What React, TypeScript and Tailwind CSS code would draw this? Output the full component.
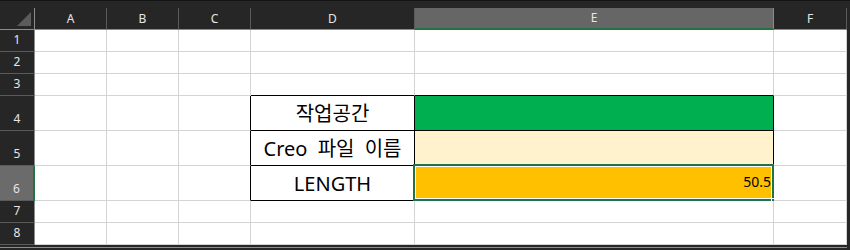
import React from 'react';

const cols = [
  { key: 'A', w: 'w-[72px]' },
  { key: 'B', w: 'w-[72px]' },
  { key: 'C', w: 'w-[72px]' },
  { key: 'D', w: 'w-[164px]' },
  { key: 'E', w: 'w-[359px]' },
  { key: 'F', w: 'w-[73px]' },
];

const rows = [
  { n: 1, h: 'h-[22px]' },
  { n: 2, h: 'h-[22px]' },
  { n: 3, h: 'h-[22px]' },
  { n: 4, h: 'h-[35px]' },
  { n: 5, h: 'h-[35px]' },
  { n: 6, h: 'h-[35px]' },
  { n: 7, h: 'h-[22px]' },
  { n: 8, h: 'h-[22px]' },
];

// cells inside the bordered block D4:E6
const boxed = (col: string, row: number) => (col === 'D' || col === 'E') && row >= 4 && row <= 6;

const cellBorder = (col: string, row: number) => {
  const right = boxed(col, row) || (col === 'C' && row >= 4 && row <= 6) ? 'border-r-black' : 'border-r-[#d4d4d4]';
  const bottom = boxed(col, row) || ((col === 'D' || col === 'E') && row === 3) ? 'border-b-black' : 'border-b-[#d4d4d4]';
  return `${right} ${bottom}`;
};

const fills: Record<string, string> = {
  E4: 'bg-[#00b050]',
  E5: 'bg-[#fff2cc]',
  E6: 'bg-[#ffc000]',
};

const texts: Record<string, string> = {
  D4: '작업공간',
  D5: 'Creo 파일 이름',
  D6: 'LENGTH',
};

const App: React.FC = () => {
  return (
    <div className="w-[850px] h-[250px] bg-[#262626] overflow-hidden border-t border-t-[#141414] font-['Noto_Sans','Noto_Sans_CJK_KR',sans-serif]">
      <div className="h-[7px]" />

      {/* column headers */}
      <div className="flex h-[22px]">
        <div className="w-[35px] shrink-0 border-r border-r-[#8c8c8c] border-b border-b-[#8c8c8c] relative">
          <svg className="absolute right-[3px] bottom-[3px]" width="14" height="14" viewBox="0 0 14 14">
            <polygon points="14,0 14,14 0,14" fill="#5c5c5c" />
          </svg>
        </div>
        {cols.map(c => (
          <div
            key={c.key}
            className={`${c.w} shrink-0 flex items-center justify-center text-[12px] text-[#e6e6e6] border-r ${
              c.key === 'E'
                ? 'bg-[#666666] border-r-[#8c8c8c] border-b-2 border-b-[#217346]'
                : 'border-r-[#5a5a5a] border-b border-b-[#8c8c8c]'
            }`}
          >
            {c.key}
          </div>
        ))}
      </div>

      {rows.map(r => (
        <div key={r.n} className={`flex ${r.h}`}>
          <div
            className={`w-[35px] shrink-0 flex items-end justify-center pb-[2px] text-[12px] text-[#e6e6e6] border-b border-b-[#5a5a5a] ${
              r.n === 6 ? 'bg-[#6b6b6b] border-r-2 border-r-[#217346]' : 'border-r border-r-[#8c8c8c]'
            }`}
          >
            {r.n}
          </div>
          {cols.map(c => {
            const id = `${c.key}${r.n}`;
            return (
              <div
                key={id}
                className={`${c.w} shrink-0 border-r border-b relative flex items-end justify-center pb-[6px] ${cellBorder(c.key, r.n)} ${fills[id] ?? 'bg-white'}`}
              >
                {texts[id] && (
                  <span className="text-[20px] leading-none text-black whitespace-nowrap [word-spacing:5px]">{texts[id]}</span>
                )}
                {id === 'E6' && (
                  <>
                    <span className="ml-auto pr-[2px] mb-[5px] text-[14px] leading-none text-black">50.5</span>
                    <div className="absolute -left-[2px] -top-[2px] -right-[1px] -bottom-[1px] border-2 border-[#217346]">
                      <div className="w-full h-full border border-white" />
                    </div>
                    <div className="absolute -right-[4px] -bottom-[4px] w-[6px] h-[6px] bg-[#217346] border border-white" />
                  </>
                )}
              </div>
            );
          })}
        </div>
      ))}

      <div className="h-[2px]" />
      <div className="h-px w-[847px] bg-[#8c8c8c]" />
    </div>
  );
};

export default App;
